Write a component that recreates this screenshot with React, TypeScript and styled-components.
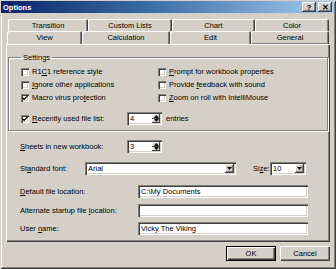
import React from "react";
import styled, { createGlobalStyle } from "styled-components";

const GlobalStyle = createGlobalStyle`
  html, body { margin: 0; padding: 0; background: #d4d0c8; }
  body { font-family: "Liberation Sans", Arial, sans-serif; font-size: 7.5px; color: #000; }
  * { box-sizing: border-box; }
`;

const Window = styled.div`
  width: 336px;
  height: 269px;
  background: #d4d0c8;
  padding: 1px 2px 0 1px;
  box-shadow: inset 1px 1px #d4d0c8, inset -1px -1px #404040, inset 2px 2px #fff, inset -2px -2px #808080;
`;

const TitleBar = styled.div`
  height: 12px;
  display: flex;
  align-items: center;
  padding: 0 2px;
  background: linear-gradient(90deg, #0a246a 0%, #3a6ea5 45%, #a6caf0 100%);
  color: #fff;
  font-weight: bold;
  font-size: 7.5px;
`;

const TitleText = styled.span`
  flex: 1;
`;

const CaptionButton = styled.span<{ $gap?: number }>`
  width: 14px;
  height: 10px;
  margin-left: ${(p) => p.$gap ?? 0}px;
  background: #d4d0c8;
  color: #000;
  font-size: 8px;
  font-weight: bold;
  display: flex;
  align-items: center;
  justify-content: center;
  box-shadow: inset -1px -1px #404040, inset 1px 1px #fff, inset -2px -2px #808080;
`;

const Body = styled.div`
  padding: 0 0 0 5px;
`;

const TabRow = styled.div<{ $left: number; $top: number; $h: number }>`
  display: flex;
  margin-left: ${(p) => p.$left}px;
  margin-top: ${(p) => p.$top}px;
  height: ${(p) => p.$h}px;
`;

const Tab = styled.div<{ $w: number; $active?: boolean }>`
  width: ${(p) => p.$w}px;
  height: 100%;
  display: flex;
  align-items: center;
  justify-content: center;
  border-radius: 2px 2px 0 0;
  box-shadow: inset 1px 1px #fff, inset -1px 0 #404040, inset -2px 0 #808080;
  background: #d4d0c8;
  ${(p) => (p.$active ? "box-shadow: inset 1px 1px #fff, inset -1px 0 #404040, inset -2px 0 #808080, inset 0 -1px #808080;" : "")}
`;

const Panel = styled.div`
  width: 324px;
  height: 198px;
  padding: 9px 2px 0 2px;
  box-shadow: inset 1px 1px #fff, inset -1px -1px #404040, inset -2px -2px #808080;
`;

const Group = styled.fieldset`
  margin: 0;
  padding: 3px 0 0 12px;
  height: 78px;
  width: 320px;
  border: 1px solid #808080;
  box-shadow: 1px 1px #fff, inset 1px 1px #fff;
`;

const Legend = styled.legend`
  padding: 0 2px;
  margin-left: 0px;
  font-size: 7.5px;
`;

const CheckGrid = styled.div`
  display: grid;
  grid-template-columns: 137px 1fr;
  grid-auto-rows: 13px;
`;

const CheckRow = styled.div<{ $mt?: number }>`
  display: flex;
  align-items: center;
  height: 13px;
  margin-top: ${(p) => p.$mt ?? 0}px;
`;

const Box = styled.span`
  width: 8px;
  height: 8px;
  flex: none;
  margin-right: 3px;
  background: #fff;
  box-shadow: inset 1px 1px #808080, inset 2px 2px #404040, inset -1px -1px #fff, inset -2px -2px #d4d0c8;
  display: flex;
  align-items: center;
  justify-content: center;
`;

const Sunken = styled.div<{ $w: number; $ml?: number }>`
  width: ${(p) => p.$w}px;
  height: 13px;
  margin-left: ${(p) => p.$ml ?? 0}px;
  background: #fff;
  display: flex;
  align-items: stretch;
  padding: 2px 2px 2px 3px;
  box-shadow: inset 1px 1px #808080, inset 2px 2px #404040, inset -1px -1px #fff, inset -2px -2px #d4d0c8;
`;

const FieldText = styled.span`
  flex: 1;
  display: flex;
  align-items: center;
  white-space: nowrap;
  overflow: hidden;
`;

const SpinCol = styled.div`
  width: 8px;
  display: flex;
  flex-direction: column;
`;

const SpinBtn = styled.div`
  flex: 1;
  background: #d4d0c8;
  display: flex;
  align-items: center;
  justify-content: center;
  box-shadow: inset -1px -1px #404040, inset 1px 1px #fff;
`;

const DropBtn = styled.div`
  width: 9px;
  background: #d4d0c8;
  display: flex;
  align-items: center;
  justify-content: center;
  box-shadow: inset -1px -1px #404040, inset 1px 1px #fff, inset -2px -2px #808080;
`;

const Field = styled.div<{ $mt: number }>`
  display: flex;
  align-items: center;
  height: 13px;
  margin-top: ${(p) => p.$mt}px;
  padding-left: 12px;
`;

const FieldLabel = styled.span<{ $w: number; $ml?: number }>`
  width: ${(p) => p.$w}px;
  margin-left: ${(p) => p.$ml ?? 0}px;
  flex: none;
  white-space: nowrap;
`;

const Suffix = styled.span`
  margin-left: 4px;
`;

const ButtonRow = styled.div`
  display: flex;
  justify-content: flex-end;
  gap: 4px;
  margin-top: 4px;
  padding-right: 4px;
`;

const Button = styled.div<{ $default?: boolean }>`
  width: 50px;
  height: 15px;
  display: flex;
  align-items: center;
  justify-content: center;
  background: #d4d0c8;
  box-shadow: ${(p) =>
    p.$default
      ? "inset 0 0 0 1px #000, inset 2px 2px #fff, inset -2px -2px #404040, inset -3px -3px #808080"
      : "inset 1px 1px #fff, inset -1px -1px #404040, inset -2px -2px #808080"};
`;

const Check = () => (
  <svg width="6" height="6" viewBox="0 0 7 7">
    <path d="M0.5 3 L2.5 5 L6.5 1" stroke="#000" strokeWidth="1.4" fill="none" />
  </svg>
);

const Up = () => (
  <svg width="5" height="3" viewBox="0 0 5 3">
    <path d="M0 3 L2.5 0 L5 3 Z" fill="#000" />
  </svg>
);
const Down = () => (
  <svg width="5" height="3" viewBox="0 0 5 3">
    <path d="M0 0 L2.5 3 L5 0 Z" fill="#000" />
  </svg>
);

const CheckItem = ({ checked, children, mt }: { checked?: boolean; children: React.ReactNode; mt?: number }) => (
  <CheckRow $mt={mt}>
    <Box>{checked ? <Check /> : null}</Box>
    <span>{children}</span>
  </CheckRow>
);

const Spinner = ({ value }: { value: string }) => (
  <Sunken $w={35}>
    <FieldText>{value}</FieldText>
    <SpinCol>
      <SpinBtn>
        <Up />
      </SpinBtn>
      <SpinBtn>
        <Down />
      </SpinBtn>
    </SpinCol>
  </Sunken>
);

const Combo = ({ value, w, ml }: { value: string; w: number; ml?: number }) => (
  <Sunken $w={w} $ml={ml}>
    <FieldText>{value}</FieldText>
    <DropBtn>
      <Down />
    </DropBtn>
  </Sunken>
);

export default function App() {
  return (
    <>
      <GlobalStyle />
      <Window>
        <TitleBar>
          <TitleText>Options</TitleText>
          <CaptionButton>?</CaptionButton>
          <CaptionButton $gap={2}>✕</CaptionButton>
        </TitleBar>
        <Body>
          <TabRow $left={2} $top={6} $h={12}>
            <Tab $w={80}>Transition</Tab>
            <Tab $w={84}>Custom Lists</Tab>
            <Tab $w={83}>Chart</Tab>
            <Tab $w={74}>Color</Tab>
          </TabRow>
          <TabRow $left={1} $top={0} $h={13}>
            <Tab $w={75}>View</Tab>
            <Tab $w={88}>Calculation</Tab>
            <Tab $w={81}>Edit</Tab>
            <Tab $w={78} $active>
              General
            </Tab>
          </TabRow>
          <Panel>
            <Group>
              <Legend>Settings</Legend>
              <CheckGrid>
                <CheckItem>
                  R1<u>C</u>1 reference style
                </CheckItem>
                <CheckItem>
                  <u>P</u>rompt for workbook properties
                </CheckItem>
                <CheckItem>
                  <u>I</u>gnore other applications
                </CheckItem>
                <CheckItem>
                  Provide <u>f</u>eedback with sound
                </CheckItem>
                <CheckItem checked>
                  Macro virus pro<u>t</u>ection
                </CheckItem>
                <CheckItem>
                  <u>Z</u>oom on roll with IntelliMouse
                </CheckItem>
              </CheckGrid>
              <CheckRow $mt={8}>
                <Box>
                  <Check />
                </Box>
                <FieldLabel $w={95}>
                  <u>R</u>ecently used file list:
                </FieldLabel>
                <Spinner value="4" />
                <Suffix>entries</Suffix>
              </CheckRow>
            </Group>
            <Field $mt={9}>
              <FieldLabel $w={107}>
                <u>S</u>heets in new workbook:
              </FieldLabel>
              <Spinner value="3" />
            </Field>
            <Field $mt={9}>
              <FieldLabel $w={65}>
                St<u>a</u>ndard font:
              </FieldLabel>
              <Combo value="Arial" w={151} />
              <FieldLabel $w={0} $ml={17}>
                Si<u>z</u>e:
              </FieldLabel>
              <Combo value="10" w={36} ml={17} />
            </Field>
            <Field $mt={10}>
              <FieldLabel $w={118}>
                <u>D</u>efault file location:
              </FieldLabel>
              <Sunken $w={170}>
                <FieldText>C:\My Documents</FieldText>
              </Sunken>
            </Field>
            <Field $mt={6}>
              <FieldLabel $w={118}>
                Alternate startup file <u>l</u>ocation:
              </FieldLabel>
              <Sunken $w={170} />
            </Field>
            <Field $mt={5}>
              <FieldLabel $w={118}>
                User <u>n</u>ame:
              </FieldLabel>
              <Sunken $w={170}>
                <FieldText>Vicky The Viking</FieldText>
              </Sunken>
            </Field>
          </Panel>
          <ButtonRow>
            <Button $default>OK</Button>
            <Button>Cancel</Button>
          </ButtonRow>
        </Body>
      </Window>
    </>
  );
}
